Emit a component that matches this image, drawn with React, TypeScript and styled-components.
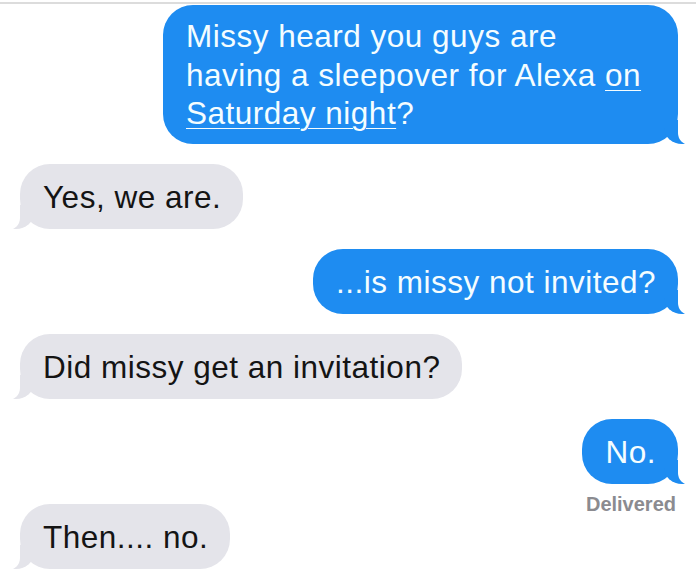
import React from 'react';
import styled, { createGlobalStyle, css } from 'styled-components';

const GlobalStyle = createGlobalStyle`
  html, body {
    margin: 0;
    padding: 0;
    background: #ffffff;
  }
  body {
    font-family: 'Liberation Sans', Arial, sans-serif;
    -webkit-font-smoothing: antialiased;
  }
`;

const BLUE = '#1e8cf1';
const GRAY = '#e4e4ea';

const Screen = styled.div`
  width: 696px;
  height: 588px;
  overflow: hidden;
  background: #ffffff;
  border-top: 2px solid #dcdcdc;
  margin-top: 2px;
  box-sizing: border-box;
`;

const Thread = styled.div`
  display: flex;
  flex-direction: column;
  gap: 20px;
  padding: 1px 18px 0 20px;
`;

const Row = styled.div<{ $out?: boolean }>`
  display: flex;
  flex-direction: column;
  align-items: ${({ $out }) => ($out ? 'flex-end' : 'flex-start')};
`;

const Bubble = styled.div<{ $out?: boolean }>`
  position: relative;
  box-sizing: border-box;
  padding: 14px 22px 13px 23px;
  border-radius: 30px;
  font-size: 31.5px;
  line-height: 38px;
  letter-spacing: 0.5px;
  ${({ $out }) =>
    $out
      ? css`
          background: ${BLUE};
          color: #f4fdff;
        `
      : css`
          background: ${GRAY};
          color: #141414;
        `}

  &::before {
    content: '';
    position: absolute;
    bottom: 0;
    width: 22px;
    height: 24px;
    background: ${({ $out }) => ($out ? BLUE : GRAY)};
    ${({ $out }) =>
      $out
        ? css`
            right: -8px;
            border-bottom-left-radius: 18px 16px;
          `
        : css`
            left: -8px;
            border-bottom-right-radius: 18px 16px;
          `}
  }

  &::after {
    content: '';
    position: absolute;
    bottom: -1px;
    width: 24px;
    height: 26px;
    background: #ffffff;
    ${({ $out }) =>
      $out
        ? css`
            right: -24px;
            border-bottom-left-radius: 12px;
          `
        : css`
            left: -24px;
            border-bottom-right-radius: 12px;
          `}
  }
`;

const Wide = styled(Bubble)`
  width: 515px;
  line-height: 38.5px;
  padding-top: 12px;
  padding-bottom: 11px;
`;

const Link = styled.span`
  text-decoration: underline;
  text-decoration-thickness: 1px;
  text-underline-offset: 4px;
`;

const Status = styled.div`
  margin-top: 9px;
  margin-bottom: -31px;
  margin-right: 2px;
  font-size: 20px;
  line-height: 22px;
  font-weight: 700;
  color: #8b8b90;
`;

export default function App() {
  return (
    <>
      <GlobalStyle />
      <Screen>
        <Thread>
          <Row $out>
            <Wide $out>
              Missy heard you guys are
              <br />
              having a sleepover for Alexa <Link>on</Link>
              <br />
              <Link>Saturday night</Link>?
            </Wide>
          </Row>
          <Row>
            <Bubble>Yes, we are.</Bubble>
          </Row>
          <Row $out>
            <Bubble $out>...is missy not invited?</Bubble>
          </Row>
          <Row>
            <Bubble>Did missy get an invitation?</Bubble>
          </Row>
          <Row $out>
            <Bubble $out>No.</Bubble>
            <Status>Delivered</Status>
          </Row>
          <Row>
            <Bubble>Then.... no.</Bubble>
          </Row>
        </Thread>
      </Screen>
    </>
  );
}
